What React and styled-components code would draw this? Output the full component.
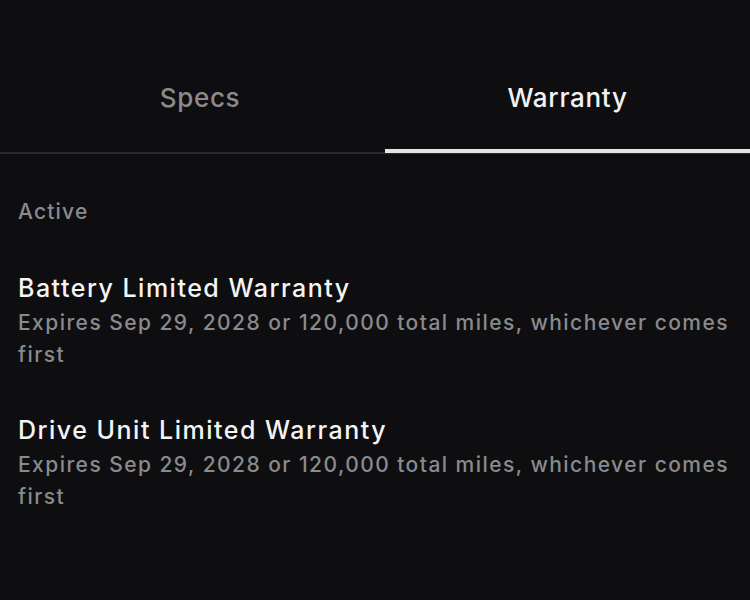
import React from "react";
import styled, { createGlobalStyle } from "styled-components";

const Global = createGlobalStyle`
  html, body {
    margin: 0;
    padding: 0;
    background: #0e0e10;
  }
  body {
    font-family: Inter, "Noto Sans", "Liberation Sans", sans-serif;
    -webkit-font-smoothing: antialiased;
  }
`;

const Page = styled.div`
  width: 750px;
  height: 600px;
  background: #0e0e10;
  overflow: hidden;
`;

const TabBar = styled.div`
  display: grid;
  grid-template-columns: 350px 365px;
  column-gap: 10px;
  padding-left: 25px;
  border-bottom: 2px solid #2a2a2c;
`;

const Tab = styled.div`
  display: flex;
  justify-content: center;
  padding: 82px 0 35px;
  font-size: 26px;
  line-height: 32px;
  font-weight: 500;
  letter-spacing: 0.7px;
  color: ${(p) => (p.$active ? "#f2f2f2" : "#8a8a8c")};
  border-bottom: 4px solid ${(p) => (p.$active ? "#e4e4e4" : "transparent")};
  margin-bottom: -1px;
`;

const Content = styled.div`
  padding: 44px 18px 0;
`;

const SectionLabel = styled.div`
  font-size: 21px;
  line-height: 28px;
  font-weight: 500;
  letter-spacing: 1.2px;
  color: #8a8a8c;
  margin-bottom: 46px;
`;

const Item = styled.div`
  margin-bottom: 43px;
`;

const ItemTitle = styled.div`
  font-size: 25px;
  line-height: 32px;
  font-weight: 500;
  letter-spacing: 1.5px;
  color: #f4f4f4;
  margin-bottom: 3px;
`;

const ItemText = styled.div`
  font-size: 21px;
  line-height: 32px;
  font-weight: 500;
  letter-spacing: 1.45px;
  color: #8a8a8c;
`;

const items = [
  "Battery Limited Warranty",
  "Drive Unit Limited Warranty",
];

export default function App() {
  return (
    <Page>
      <Global />
      <TabBar>
        <Tab>Specs</Tab>
        <Tab $active>Warranty</Tab>
      </TabBar>
      <Content>
        <SectionLabel>Active</SectionLabel>
        {items.map((t) => (
          <Item key={t}>
            <ItemTitle>{t}</ItemTitle>
            <ItemText>
              Expires Sep 29, 2028 or 120,000 total miles, whichever comes first
            </ItemText>
          </Item>
        ))}
      </Content>
    </Page>
  );
}
